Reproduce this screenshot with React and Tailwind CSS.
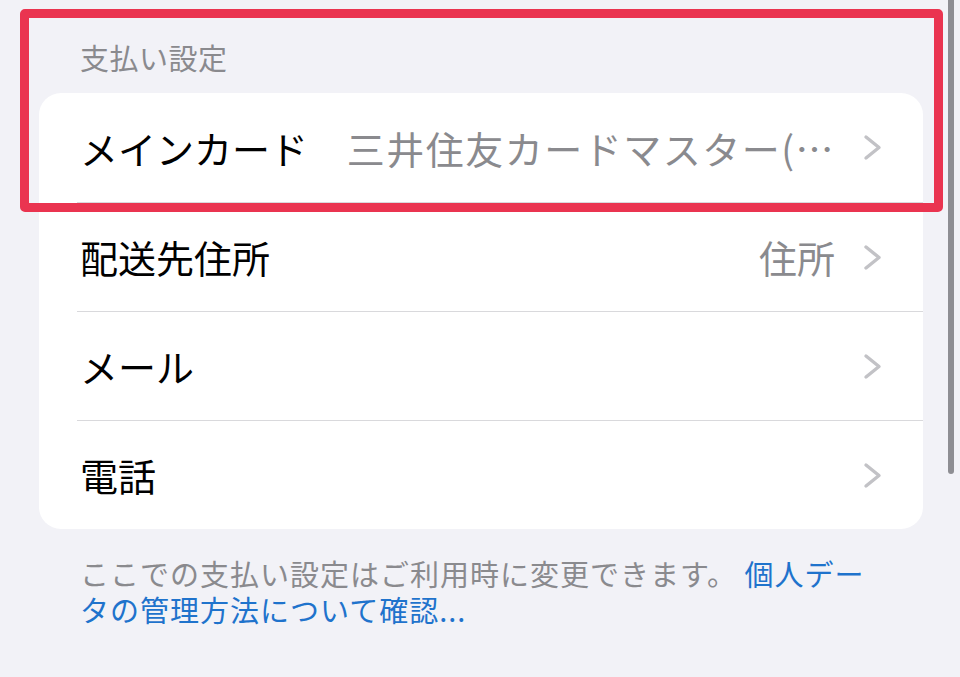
import React from 'react';

const rows = [
  { label: 'メインカード', value: '三井住友カードマスター(…', valueClass: 'tracking-[1.5px]' },
  { label: '配送先住所', value: '住所', valueClass: '' },
  { label: 'メール', value: '', valueClass: '' },
  { label: '電話', value: '', valueClass: '' },
];

function Chevron() {
  return (
    <svg width="19" height="27" viewBox="0 0 19 27" className="flex-none">
      <polyline
        points="3,3 16,13.5 3,24"
        fill="none"
        stroke="#c2c2c6"
        strokeWidth="3.4"
        strokeLinecap="round"
        strokeLinejoin="round"
      />
    </svg>
  );
}

export default function App() {
  return (
    <div
      className="relative h-[677px] w-[960px] overflow-hidden bg-[#f2f2f7]"
      style={{ fontFamily: '"Noto Sans CJK JP", "Noto Sans", sans-serif' }}
    >
      <div className="pl-[39px] pr-[37px] pt-[39px]">
        {/* Section header */}
        <div className="pl-[41px] text-[29px] leading-[36px] tracking-[0.5px] text-[#8a8a8e]">支払い設定</div>

        {/* Card */}
        <div className="mt-[18px] overflow-hidden rounded-[22px] bg-white">
          {rows.map((row, i) => (
            <div key={row.label} className="pl-[38px]">
              <div
                className={
                  'flex h-[109px] items-center pl-[3px] pr-[41px] ' +
                  (i > 0 ? 'border-t border-[#d9d9dc]' : '')
                }
              >
                <span className="flex-none text-[38px] leading-none text-black">{row.label}</span>
                <span
                  className={
                    'ml-auto whitespace-nowrap pl-4 text-[38px] leading-none text-[#8a8a8e] ' + row.valueClass
                  }
                >
                  {row.value}
                </span>
                <span className="ml-[28px] flex items-center">
                  <Chevron />
                </span>
              </div>
            </div>
          ))}
        </div>

        {/* Footer */}
        <div className="mt-[26px] pl-[41px] text-[29px] leading-[36px] tracking-[1px] text-[#8a8a8e]">
          <div className="whitespace-nowrap">
            ここでの支払い設定はご利用時に変更できます。{' '}
            <span className="text-[#1f73cc]">個人デー</span>
          </div>
          <div className="whitespace-nowrap text-[#1f73cc]">タの管理方法について確認...</div>
        </div>
      </div>

      {/* Highlight annotation */}
      <div className="pointer-events-none absolute left-[20px] top-[9px] h-[203px] w-[923px] rounded-[5px] border-[9px] border-[#ea3450]" />

      {/* Scrollbar */}
      <div className="absolute right-[6px] top-[-10px] h-[484px] w-[6px] rounded-full bg-[#8e8e93]" />
    </div>
  );
}
